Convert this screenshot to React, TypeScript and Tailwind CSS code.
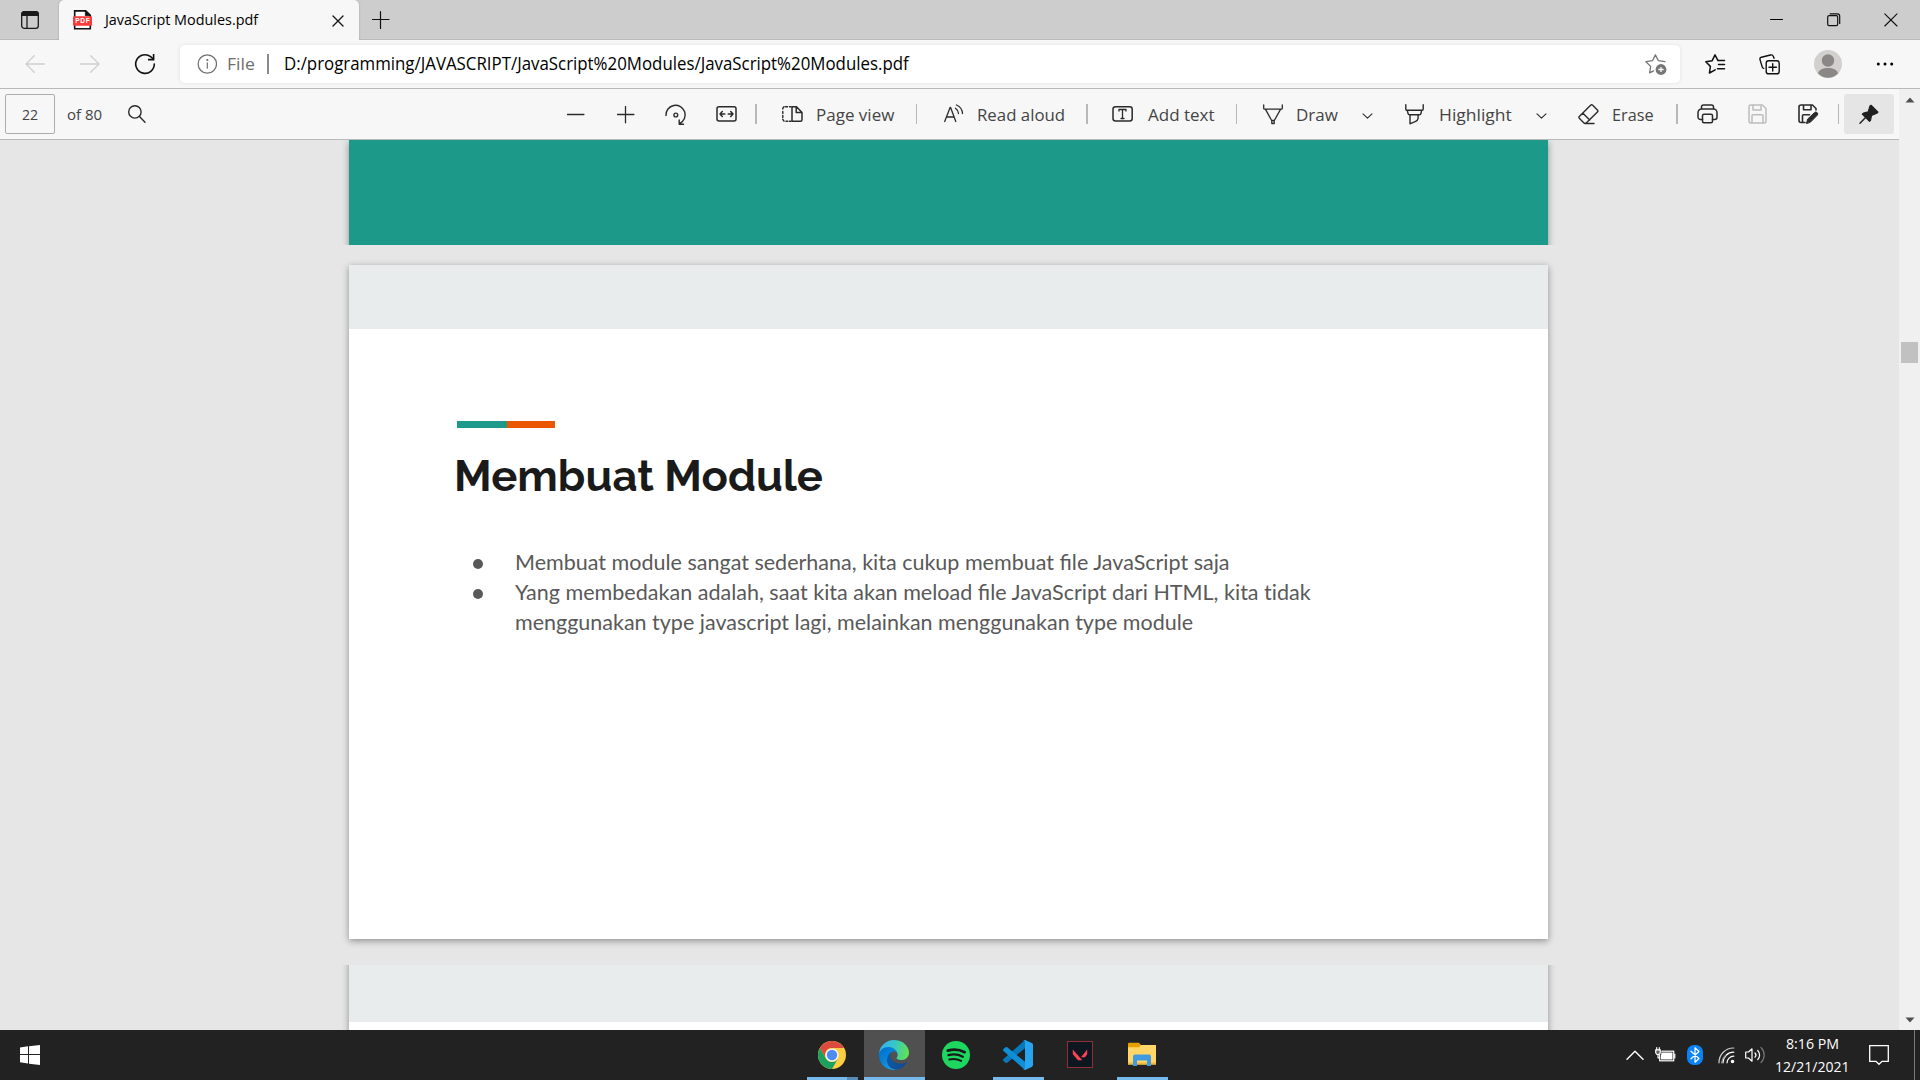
import React, { useLayoutEffect, useRef, useState } from 'react';

type FitProps = { w: number; className?: string; children: React.ReactNode };

/* Single line of text condensed or expanded to an exact advance width. */
function Fit({ w, className = '', children }: FitProps) {
  const ref = useRef<HTMLSpanElement>(null);
  const [scale, setScale] = useState(1);
  useLayoutEffect(() => {
    if (ref.current) setScale(w / ref.current.offsetWidth);
  }, [w]);
  return (
    <span className={`block shrink-0 whitespace-nowrap ${className}`} style={{ width: w }}>
      <span ref={ref} className="inline-block origin-left" style={{ transform: `scaleX(${scale})` }}>
        {children}
      </span>
    </span>
  );
}

type IconProps = { w: number; h: number; className?: string; sw?: number; children: React.ReactNode };

function Icon({ w, h, className = '', sw = 1.3, children }: IconProps) {
  return (
    <svg
      width={w}
      height={h}
      viewBox={`0 0 ${w} ${h}`}
      fill="none"
      stroke="currentColor"
      strokeWidth={sw}
      strokeLinecap="round"
      strokeLinejoin="round"
      className={`block shrink-0 ${className}`}
    >
      {children}
    </svg>
  );
}

function TabStrip() {
  return (
    <div className="flex h-10 border-b border-[#bababa] bg-[#cdcdcd]">
      <div className="flex w-[59px] shrink-0 items-center pl-5">
        <Icon w={20} h={20} className="text-[#1a1a1a]">
          <rect x="1.7" y="1.7" width="16.6" height="16.6" rx="2.6" strokeWidth="1.3" />
          <path d="M1.7 5.4V4.3a2.6 2.6 0 0 1 2.6-2.6h11.4a2.6 2.6 0 0 1 2.6 2.6v1.1z" fill="currentColor" />
          <path d="M7 5.5v12.5" />
        </Icon>
      </div>
      <div className="flex h-10 w-[300px] shrink-0 items-center rounded-t-[5px] bg-[#f7f7f7] pl-[14px] shadow-[0_0_2px_rgba(0,0,0,0.25)] [clip-path:inset(0_-3px_0_-3px)]">
        <Icon w={20} h={20}>
          <path d="M1.7 18.7V.9h11l4.6 4.5v13.3z" stroke="#111" strokeWidth="1.6" fill="#fff" strokeLinejoin="miter" />
          <path d="M12.3 1v4.7h4.8z" fill="#111" stroke="#111" strokeWidth=".7" />
          <rect x="0" y="6.3" width="19" height="9.4" rx="1" fill="#fb3a3a" stroke="none" />
          <text x="9.5" y="13.3" fontFamily="Liberation Sans" fontWeight="700" fontSize="6.6" textAnchor="middle" fill="#fff" stroke="none" textLength="14.5">PDF</text>
        </Icon>
        <Fit w={153} className="ml-3 text-[14.5px] text-black">JavaScript Modules.pdf</Fit>
        <Icon w={12} h={12} className="ml-[74px] mt-px text-[#1a1a1a]" sw={1.4}>
          <path d="M1 1l10 10M11 1L1 11" />
        </Icon>
      </div>
      <Icon w={18} h={18} className="ml-[13px] mt-[11px] text-[#111]" sw={1.2}>
        <path d="M8.5 .6v16.8M.2 8.5h16.800" />
      </Icon>
      <div className="ml-auto flex h-[39px] items-center pr-[22px] text-[#111]">
        <Icon w={14} h={14} sw={1}><path d="M.5 6.5h12" stroke="#000" /></Icon>
        <Icon w={14} h={14} sw={1.2} className="ml-[43px]">
          <rect x=".7" y="2.7" width="10" height="10" rx="1.4" />
          <path d="M3.2.9h7.2a2.3 2.3 0 0 1 2.3 2.3v7.3" />
        </Icon>
        <Icon w={14} h={14} sw={1.1} className="ml-[43px]"><path d="M.8.8l12.2 12.2M13 .8L.8 13" /></Icon>
      </div>
    </div>
  );
}

function AddressBar() {
  return (
    <div className="flex h-[49px] items-center border-b border-[#b9b9b9] bg-[#f7f7f7]">
      <Icon w={20} h={18} className="ml-[25px] mb-px text-[#cfcfcf]" sw={1.3}><path d="M19.3 9H1M9.3.8L1 9l8.3 8.2" /></Icon>
      <Icon w={20} h={18} className="ml-[35px] mb-px text-[#cfcfcf]" sw={1.3}><path d="M.7 9H19M10.7.8L19 9l-8.3 8.2" /></Icon>
      <Icon w={22} h={22} className="ml-[34px] text-[#111]" sw={1.6}>
        <path d="M20.3 11A9.3 9.3 0 1 1 16.6 3.6L19.3 6" />
        <path d="M19.6 1v5.6h-5.6" strokeLinecap="butt" strokeLinejoin="miter" />
      </Icon>
      <div className="ml-[24px] flex h-[38px] w-[1500px] items-center rounded-[5px] bg-white shadow-[0_0_4px_rgba(0,0,0,0.09)]">
        <Icon w={20} h={20} className="ml-[17px] text-[#6e6e6e]" sw={1.2}>
          <circle cx="10.3" cy="10" r="9.2" />
          <path d="M10.3 8.8v5.4" /><circle cx="10.3" cy="6" r=".5" fill="currentColor" />
        </Icon>
        <Fit w={28} className="ml-[10px] pb-px text-[17px] text-[#6e6e6e]">File</Fit>
        <div className="ml-3 h-5 w-[2px] bg-[#8a8a8a]" />
        <Fit w={625} className="ml-[15px] pb-px text-[17.5px] text-black">D:/programming/JAVASCRIPT/JavaScript%20Modules/JavaScript%20Modules.pdf</Fit>
        <Icon w={22} h={21} className="ml-auto mr-[13px] text-[#767676]" sw={1.3}>
          <path d="M20 7.6l-6.6-.9L10.4.9 7.5 6.7.9 7.7l4.8 4.7-1.1 6.5 4-2" />
          <circle cx="16" cy="15.5" r="5.4" fill="currentColor" stroke="none" />
          <path d="M16 12.9v5.2M13.4 15.5h5.2" stroke="#fff" strokeLinecap="butt" />
        </Icon>
      </div>
      <Icon w={21} h={20} className="ml-[25px] text-[#111]" sw={1.5}>
        <path d="M13 6.6L10 .9 7.2 6.7.8 7.8l4.6 4.6-1 6.6 5.8-3.2M13.5 6.6h6M13.5 10.6h6M12.5 14.8h7" />
      </Icon>
      <Icon w={22} h={21} className="ml-[33px] text-[#111]" sw={1.4}>
        <rect x="7.2" y="6.8" width="13" height="13" rx="2.4" />
        <path d="M13.7 9.6v7.4M10 13.3h7.4M15 4.3l-.6-1.7A2.4 2.4 0 0 0 11.500 1L2.400 3.200A2 2 0 0 0 1 5.600l2.200 7.300a2 2 0 0 0 1.500 1.500" />
      </Icon>
      <svg width="28" height="28" viewBox="0 0 28 28" className="ml-[33px] block shrink-0">
        <circle cx="14" cy="14" r="14" fill="#d2d0ce" />
        <circle cx="14" cy="10.5" r="6.2" fill="#8a8785" />
        <path d="M4 23.500C5 19.500 9 18 14 18s9 1.500 10 5.500A14 14 0 0 1 4 23.500z" fill="#8a8785" />
      </svg>
      <svg width="18" height="4" viewBox="0 0 18 4" className="ml-[34px] block shrink-0">
        <circle cx="2.300" cy="2" r="1.500" /><circle cx="9" cy="2" r="1.500" /><circle cx="15.700" cy="2" r="1.500" />
      </svg>
    </div>
  );
}

const label = 'pt-px text-[17px] text-[#444]';

function PdfToolbar() {
  return (
    <div className="flex h-[51px] shrink-0 items-center border-b border-[#b9b9b9] bg-[#f7f7f7] text-[#2b2b2b]">
      <div className="ml-[5px] flex h-10 w-[50px] items-center rounded-[2px] border border-[#adadad] pl-4">
        <Fit w={16} className="pt-px text-[15px] text-[#444]">22</Fit>
      </div>
      <Fit w={35} className="ml-[12px] pt-px text-[15px] text-[#444]">of 80</Fit>
      <Icon w={18} h={18} className="ml-[26px]" sw={1.4}><circle cx="6.900" cy="6.900" r="6.200" /><path d="M11.500 11.500l5.500 5.700" /></Icon>
      <Icon w={18} h={18} className="ml-[421px] mt-px"><path d="M.3 8.500h16.600" /></Icon>
      <Icon w={18} h={18} className="ml-[32px] mt-px"><path d="M.3 8.500h16.600M8.500 .3v16.500" /></Icon>
      <Icon w={22} h={22} className="ml-[30px] mt-px" sw={1.4}>
        <path d="M1 11.500A9.600 9.600 0 1 1 14.800 19.500M14.200 16v4.300h4.300" /><circle cx="10.800" cy="11" r="1.900" />
      </Icon>
      <Icon w={21} h={16} className="ml-[29px]" sw={1.5}>
        <rect x="1" y=".8" width="19" height="14.200" rx="2" />
        <path d="M4.300 8h4.500M6.300 5.600L4 8l2.300 2.400M16.700 8h-4.500M14.700 5.600L17 8l-2.300 2.400" />
      </Icon>
      <div className="ml-[18px] h-5 w-[2px] bg-[#b8b8b8]" />
      <Icon w={21} h={16} className="ml-[25px]" sw={1.4}>
        <path d="M10 .8v14.400h8.500a1.500 1.500 0 0 0 1.500-1.500V6.500L14.500.8zM14.200 1v5.600h5.600" strokeWidth="1.500" />
        <path d="M7.500.8H9M3.500.8h2M.8 3V2.200L2 .8M.8 5.500v2M.8 9.500v2M.8 13.300l1.200 1.900M4 15.200h1.800M7.500 15.200H9" />
      </Icon>
      <Fit w={78} className={`ml-[13px] ${label}`}>Page view</Fit>
      <div className="ml-[22px] h-5 w-px bg-[#b8b8b8]" />
      <Icon w={20} h={20} className="ml-[27px]" sw={1.400}>
        <path d="M.7 17.500L6.100 3.500h.5l5.200 14M2.600 13h7.500M11.500 4.300a7 7 0 0 1 3 5.200M12.500 1a10 10 0 0 1 6 8.500" strokeWidth="1.300" />
      </Icon>
      <Fit w={88} className={`ml-[13px] ${label}`}>Read aloud</Fit>
      <div className="ml-[21px] h-5 w-[2px] bg-[#b8b8b8]" />
      <Icon w={21} h={16} className="ml-[24px]" sw={1.500}>
        <rect x="1" y=".8" width="19.200" height="14.200" rx="2.500" />
        <path d="M7 5V3.500h7V5M10.500 3.500v9M9 12.500h3" strokeWidth="1.300" />
      </Icon>
      <Fit w={67} className={`ml-[15px] ${label}`}>Add text</Fit>
      <div className="ml-[21px] h-5 w-px bg-[#b8b8b8]" />
      <Icon w={20} h={21} className="ml-[26px]" sw={1.300}>
        <path d="M.7.8v3.400a1 1 0 0 0 1 1h16.600a1 1 0 0 0 1-1V.8M2.500 5.400l6.300 11.300v2.800h2.400v-2.800L17.500 5.400M8.800 16.500h2.400" />
      </Icon>
      <Fit w={42} className={`ml-[13px] ${label}`}>Draw</Fit>
      <Icon w={11} h={6} className="ml-[24px] mt-1" sw={1.100}><path d="M1 .8l4.500 4.300L10 .8" /></Icon>
      <Icon w={19} h={21} className="ml-[32px]" sw={1.400}>
        <path d="M.8.8v4.400a1 1 0 0 0 1 1h15.400a1 1 0 0 0 1-1V.8M2.300 6.200l.8 3.600a1.500 1.500 0 0 0 1.400 1h10a1.500 1.500 0 0 0 1.400-1l.8-3.600M5 11v8.800l5.600-2.400a4 4 0 0 0 2.500-3V11" />
      </Icon>
      <Fit w={73} className={`ml-[15px] ${label}`}>Highlight</Fit>
      <Icon w={11} h={6} className="ml-[24px] mt-1" sw={1.100}><path d="M1 .8l4.500 4.300L10 .8" /></Icon>
      <Icon w={21} h={21} className="ml-[31px]" sw={1.400}>
        <path d="M1.300 12.400L12.600 1.300a1.500 1.500 0 0 1 2.100 0l4.700 4.600a1.500 1.500 0 0 1 0 2.100L8.500 18.700a2 2 0 0 1-2.800 0l-4.400-4.400a1.400 1.400 0 0 1 0-1.900zM4.700 9l7 6.900M7 19.500h9" />
      </Icon>
      <Fit w={42} className={`ml-[13px] ${label}`}>Erase</Fit>
      <div className="ml-[22px] h-5 w-[2px] bg-[#b8b8b8]" />
      <Icon w={22} h={20} className="ml-[19px]" sw={1.500}>
        <path d="M5.500 15.500H3.500A2.500 2.500 0 0 1 1 13V8.500A3.500 3.500 0 0 1 4.500 5h12A3.500 3.500 0 0 1 20 8.500V13a2.500 2.500 0 0 1-2.500 2.500h-2M4.500 4.800V3a2 2 0 0 1 2-2h8a2 2 0 0 1 2 2v1.800" />
        <rect x="5.500" y="10.200" width="10" height="8.500" rx="1.500" />
      </Icon>
      <Icon w={20} h={20} className="ml-[29px] text-[#bdbdbd]" sw={1.500}>
        <path d="M3 1h11.500L18 4.500V17a2 2 0 0 1-2 2H3a2 2 0 0 1-2-2V3a2 2 0 0 1 2-2zM5 1.200v4.800h8V1.200M4 18.800v-7a1 1 0 0 1 1-1h9a1 1 0 0 1 1 1v7" />
      </Icon>
      <Icon w={21} h={20} className="ml-[30px]" sw={1.600}>
        <path d="M7 18.500H3a2 2 0 0 1-2-2V3a2 2 0 0 1 2-2h11.500L18 4.500V6M5.500 1.200v4.600h7.500V1.200M4.500 18.300v-6.500a1 1 0 0 1 1-1h6" />
        <path d="M8.500 19.300l1.200-4.300 6.700-6.300a1.900 1.900 0 0 1 2.800 2.600l-6.600 6.700z" fill="currentColor" strokeWidth="1" />
      </Icon>
      <div className="ml-[19px] h-5 w-px bg-[#b8b8b8]" />
      <div className="ml-[5px] flex h-10 w-[50px] items-center justify-center rounded-[3px] bg-[#e5e5e5]">
        <Icon w={20} h={20} className="text-[#1f1f1f]" sw={1.200}>
          <path d="M12 1.300l7 6.800-1.200 1.200-5.300 2.200-1 4.800-1 1-7.200-7.200 1.200-1 4.700-1.200L11 2z" fill="currentColor" />
          <path d="M6.500 13.500L1 19.200" strokeWidth="1.400" />
        </Icon>
      </div>
    </div>
  );
}

const pageShadow = 'shadow-[0_2px_7px_rgba(0,0,0,0.38)]';

function Pages() {
  return (
    <div className="flex min-h-0 flex-1 flex-col overflow-hidden bg-[#e6e6e6] pl-[349px]">
      <div className="-ml-2 h-[105px] w-[1215px] shrink-0 overflow-hidden px-2">
        <div className={`h-[115px] w-[1199px] bg-[#1c9988] ${pageShadow}`} />
      </div>
      <div className={`mt-5 flex h-[674px] w-[1199px] shrink-0 flex-col bg-white ${pageShadow}`}>
        <div className="h-16 bg-[#e8eced]" />
        <div className="ml-[108px] mt-[92px] flex h-[7px]">
          <div className="w-[50px] bg-[#1c9988]" />
          <div className="w-12 bg-[#eb5600]" />
        </div>
        <h1 className="ml-[105px] mt-[19px] font-['Raleway','Lato'] text-[42px] font-bold leading-[60px] text-[#1a1a1a]">
          <Fit w={369}>Membuat Module</Fit>
        </h1>
        <ul className="ml-[124px] mt-[40px] font-['Lato'] text-[22px] leading-[30px] text-[#595959]">
          <li className="flex">
            <span className="mr-8 mt-[12px] size-[10px] rounded-full bg-[#595959]" />
            <Fit w={715}>Membuat module sangat sederhana, kita cukup membuat file JavaScript saja</Fit>
          </li>
          <li className="flex">
            <span className="mr-8 mt-[12px] size-[10px] rounded-full bg-[#595959]" />
            <div>
              <Fit w={796}>
                Yang membedakan adalah, saat kita akan meload file JavaScript dari HTML, kita{' '}
                <span className="[font-variant-ligatures:none]">tidak</span>
              </Fit>
              <Fit w={678}>menggunakan type javascript lagi, melainkan menggunakan type module</Fit>
            </div>
          </li>
        </ul>
      </div>
      <div className="-ml-2 mt-[26px] h-[65px] w-[1215px] shrink-0 overflow-hidden px-2">
        <div className={`-mt-5 h-[120px] w-[1199px] bg-white pt-5 ${pageShadow}`}>
          <div className="h-[57px] bg-[#e8eced]" />
        </div>
      </div>
    </div>
  );
}

function Scrollbar() {
  return (
    <div className="flex w-[21px] shrink-0 flex-col items-center bg-[#f0f0f0] text-[#505050]">
      <svg width="10" height="6" viewBox="0 0 10 6" className="mt-[8px] block" fill="currentColor"><path d="M5 .5L9.500 5.500H.5z" /></svg>
      <div className="mt-[239px] h-[21px] w-[17px] bg-[#c1c1c1]" />
      <svg width="10" height="6" viewBox="0 0 10 6" className="mb-[7px] mt-auto block" fill="currentColor"><path d="M5 5.500L.5.500h9z" /></svg>
    </div>
  );
}

function ChromeLogo() {
  return (
    <svg width="28" height="28" viewBox="0 0 28 28" className="block">
      <circle cx="14" cy="14" r="14" fill="#ffcd41" />
      <path d="M1.900 7A14 14 0 0 1 26.100 7H14a7 7 0 0 0-6.100 10.500z" fill="#dc4b3e" />
      <path d="M1.900 7A14 14 0 0 0 14 28l6.100-10.500A7 7 0 0 1 7.900 17.500z" fill="#1aa15f" />
      <circle cx="14" cy="14" r="6.600" fill="#f4f4f4" />
      <circle cx="14" cy="14" r="5.200" fill="#4c8bf5" />
    </svg>
  );
}

function EdgeLogo() {
  return (
    <svg width="30" height="30" viewBox="0 0 256 256" className="block">
      <defs>
        <linearGradient id="ea" x1="63" y1="177" x2="241" y2="177" gradientUnits="userSpaceOnUse"><stop stopColor="#0c59a4" /><stop offset="1" stopColor="#114a8b" /></linearGradient>
        <linearGradient id="eb" x1="157" y1="161" x2="46" y2="40" gradientTransform="translate(0 50)" gradientUnits="userSpaceOnUse"><stop stopColor="#1b9de2" /><stop offset=".67" stopColor="#0882d8" /><stop offset="1" stopColor="#0078d4" /></linearGradient>
        <linearGradient id="ec" x1="20" y1="60" x2="250" y2="110" gradientUnits="userSpaceOnUse"><stop stopColor="#35b5ea" /><stop offset=".45" stopColor="#36c6c9" /><stop offset="1" stopColor="#62e34e" /></linearGradient>
      </defs>
      <path fill="url(#ea)" d="M231 190.500c-3.400 1.800-6.900 3.400-10.500 4.700a101.900 101.900 0 0 1-35.900 6.500c-47.300 0-88.500-32.500-88.500-74.300a31.500 31.500 0 0 1 16.400-27.300c-42.800 1.800-53.800 46.400-53.800 72.500 0 73.900 68.100 81.400 82.800 81.400 7.900 0 19.800-2.300 27-4.600l1.300-.4a128.300 128.300 0 0 0 66.600-52.800 4 4 0 0 0-5.400-5.700z" />
      <path fill="url(#eb)" d="M105.700 241.400a79.200 79.200 0 0 1-22.700-21.300 80.700 80.700 0 0 1 29.500-120c3.200-1.500 8.500-4.100 15.600-4a32.400 32.400 0 0 1 25.700 13 31.900 31.900 0 0 1 6.300 18.700c0-.2 24.500-79.600-80-79.600-43.900 0-80 41.700-80 78.200a130.200 130.200 0 0 0 12.100 56 128 128 0 0 0 156.400 67 75.500 75.500 0 0 1-62.800-8z" />
      <path fill="url(#ec)" d="M152.300 148.900c-.9 1-3.400 2.500-3.400 5.600 0 2.600 1.700 5.200 4.800 7.300 14.300 10 41.400 8.600 41.500 8.600a59.600 59.600 0 0 0 30.300-8.300 61.400 61.400 0 0 0 30.400-52.900c.3-22.400-8-37.300-11.300-43.900C223.500 23.900 177.700 0 128 0A128 128 0 0 0 0 126.200c.5-36.500 36.800-66 80-66 3.500 0 23.500.3 42 10.100 16.300 8.600 24.900 19 30.800 29.200 6.200 10.700 7.300 24.100 7.300 29.500s-2.700 13.300-7.800 19.900z" />
    </svg>
  );
}

function Taskbar() {
  return (
    <div className="flex h-[50px] shrink-0 bg-[#222222] text-white">
      <div className="flex w-[807px] shrink-0 items-center pl-5">
        <svg width="20" height="20" viewBox="0 0 20 20" fill="#fff" className="block">
          <path d="M0 2.600L8 1.300V9H0zM9 1.200L20 0v9H9zM0 10h8v8.500L0 17.300zM9 10h11v10L9 18.800z" />
        </svg>
      </div>
      <div className="flex w-[51px] shrink-0 flex-col">
        <div className="flex h-[47px] items-center pl-[11px] pt-[3px]"><ChromeLogo /></div>
        <div className="flex h-[3px]"><div className="w-10 bg-[#76b9ed]" /><div className="w-[11px] bg-[#5a8bb5]" /></div>
      </div>
      <div className="ml-[6px] flex w-[61px] shrink-0 flex-col border-b-[3px] border-[#76b9ed] bg-[#505050] pl-[15px] pt-[10px]"><EdgeLogo /></div>
      <div className="flex w-[68px] shrink-0 items-center pl-[17px]">
        <svg width="28" height="28" viewBox="0 0 28 28" fill="none" className="block" strokeLinecap="round" stroke="#191919">
          <circle cx="14" cy="14" r="14" fill="#1ed760" stroke="none" />
          <path d="M5.800 9.600c5.500-1.500 12-1 16.800 1.600" strokeWidth="2.800" />
          <path d="M6.500 14.200c4.700-1.300 10-.7 14.300 1.500" strokeWidth="2.300" />
          <path d="M7.200 18.500c4-.9 8.300-.5 12 1.400" strokeWidth="1.900" />
        </svg>
      </div>
      <div className="flex w-[51px] shrink-0 flex-col border-b-[3px] border-[#76b9ed] pl-[10px] pt-[10px]">
        <svg width="30" height="30" viewBox="0 0 30 30" className="block">
          <path d="M22 0v8.200L4.200 22.700a1.300 1.300 0 0 1-1.700 0L.5 21a1.300 1.300 0 0 1 0-1.900z" fill="#0878bd" />
          <path d="M22 30v-8.200L4.200 7.300a1.300 1.300 0 0 0-1.700 0L.5 9a1.300 1.300 0 0 0 0 1.900z" fill="#108fd6" />
          <path d="M22 0l6.800 3.100A2 2 0 0 1 30 4.900v20.200a2 2 0 0 1-1.200 1.800L22 30c-.8.300-1.500 0-2-.6 1 .5 2-.1 2-1.200V1.800C22 .7 21 .1 20 .6c.5-.6 1.200-.9 2-.6z" fill="#27a5ef" />
        </svg>
      </div>
      <div className="flex w-[73px] shrink-0 items-center pl-[23px] pb-px">
        <div className="flex h-[27px] w-[26px] items-center justify-center border border-[#8e2f3b] bg-[#0e1720]">
          <svg width="16" height="12" viewBox="0 0 16 12" fill="#fa4454" className="block">
            <path d="M.8.500v4.700L6 11.200h4.300zM15.200.500v4.700L13 8.200H9z" />
          </svg>
        </div>
      </div>
      <div className="flex w-[51px] shrink-0 flex-col border-b-[3px] border-[#76b9ed] pl-[11px] pt-[12px]">
        <svg width="28" height="25" viewBox="0 0 28 25" className="block">
          <path d="M0 2a1.200 1.200 0 0 1 1.200-1.200h9.600L13 3v4H0z" fill="#e6a100" />
          <path d="M0 5.200h11L13 3h15v19.500H0z" fill="#ffd667" />
          <path d="M0 20.500h28v2H0z" fill="#f3b93c" />
          <path d="M5 24V14.500a2 2 0 0 1 2-2h14a2 2 0 0 1 2 2V24h-4v-5.500H9V24z" fill="#3f9ae0" />
        </svg>
      </div>
      <div className="flex flex-1 items-center">
        <Icon w={18} h={10} className="ml-[458px]" sw={1.400}><path d="M1 9.200l8-8 8 8" /></Icon>
        <Icon w={21} h={16} className="ml-[11px]" sw={1.200}>
          <rect x="4.700" y="4.200" width="14" height="9.600" strokeLinejoin="miter" />
          <path d="M6 5.500h11.500v7H6z" fill="#fff" stroke="none" />
          <path d="M19.800 7v4" />
          <path d="M0 0h6.300v7.800H0z" fill="#222" stroke="none" />
          <path d="M.700 2.800h4.600v2.400a2.300 2.300 0 0 1-4.600 0z" fill="#fff" fillOpacity=".3" />
          <path d="M1.700.7v2M4.300.7v2M3 7.500v3.300h1.700" />
        </Icon>
        <Icon w={16} h={20} className="ml-[11px]" sw={1.200}>
          <rect x="0" y="0" width="16" height="20" rx="7" fill="#0a84f5" stroke="none" />
          <path d="M4 6.200l8 7.300-4 3.700V2.800l4 3.700-8 7.300" />
        </Icon>
        <Icon w={17} h={17} className="ml-[15px]" sw={1.200}>
          <path d="M1 15.800A14.500 14.500 0 0 1 15.800 1" stroke="#ccc" />
          <path d="M5 15.800A10.500 10.500 0 0 1 15.800 5.200M9 15.800a6.800 6.800 0 0 1 6.800-6.600" />
          <circle cx="14.500" cy="14.500" r="1.200" fill="#fff" />
          <path d="M3.500 15.800a13 13 0 0 1 4-7.500" stroke="#888" />
        </Icon>
        <Icon w={20} h={20} className="ml-[10px]" sw={1.200}>
          <path d="M.700 7h2.800l3.500-3.200v12.400L3.500 13H.7z" />
          <path d="M10 8a3 3 0 0 1 0 4.200M12.700 5.500a6.500 6.500 0 0 1 0 9.200" />
          <path d="M16 2.500a10.500 10.500 0 0 1 0 15" stroke="#777" />
        </Icon>
        <div className="ml-[10px] flex w-[75px] flex-col items-center text-[15px] leading-[23px]">
          <Fit w={53}>8:16 PM</Fit>
          <Fit w={75}>12/21/2021</Fit>
        </div>
        <Icon w={20} h={21} className="ml-[19px]" sw={1.300}><path d="M.7.7h18.600v15.600h-6.300l-3 3-3-3H.7z" strokeLinejoin="miter" /></Icon>
      </div>
      <div className="mr-[5px] w-px bg-[#7a7a7a]" />
    </div>
  );
}

export default function App() {
  return (
    <div className="flex h-[1080px] w-[1920px] flex-col overflow-hidden bg-[#e6e6e6] font-['Segoe_UI','Open_Sans',sans-serif]">
      <TabStrip />
      <AddressBar />
      <div className="flex min-h-0 flex-1">
        <div className="flex w-[1899px] flex-col">
          <PdfToolbar />
          <Pages />
        </div>
        <Scrollbar />
      </div>
      <Taskbar />
    </div>
  );
}
